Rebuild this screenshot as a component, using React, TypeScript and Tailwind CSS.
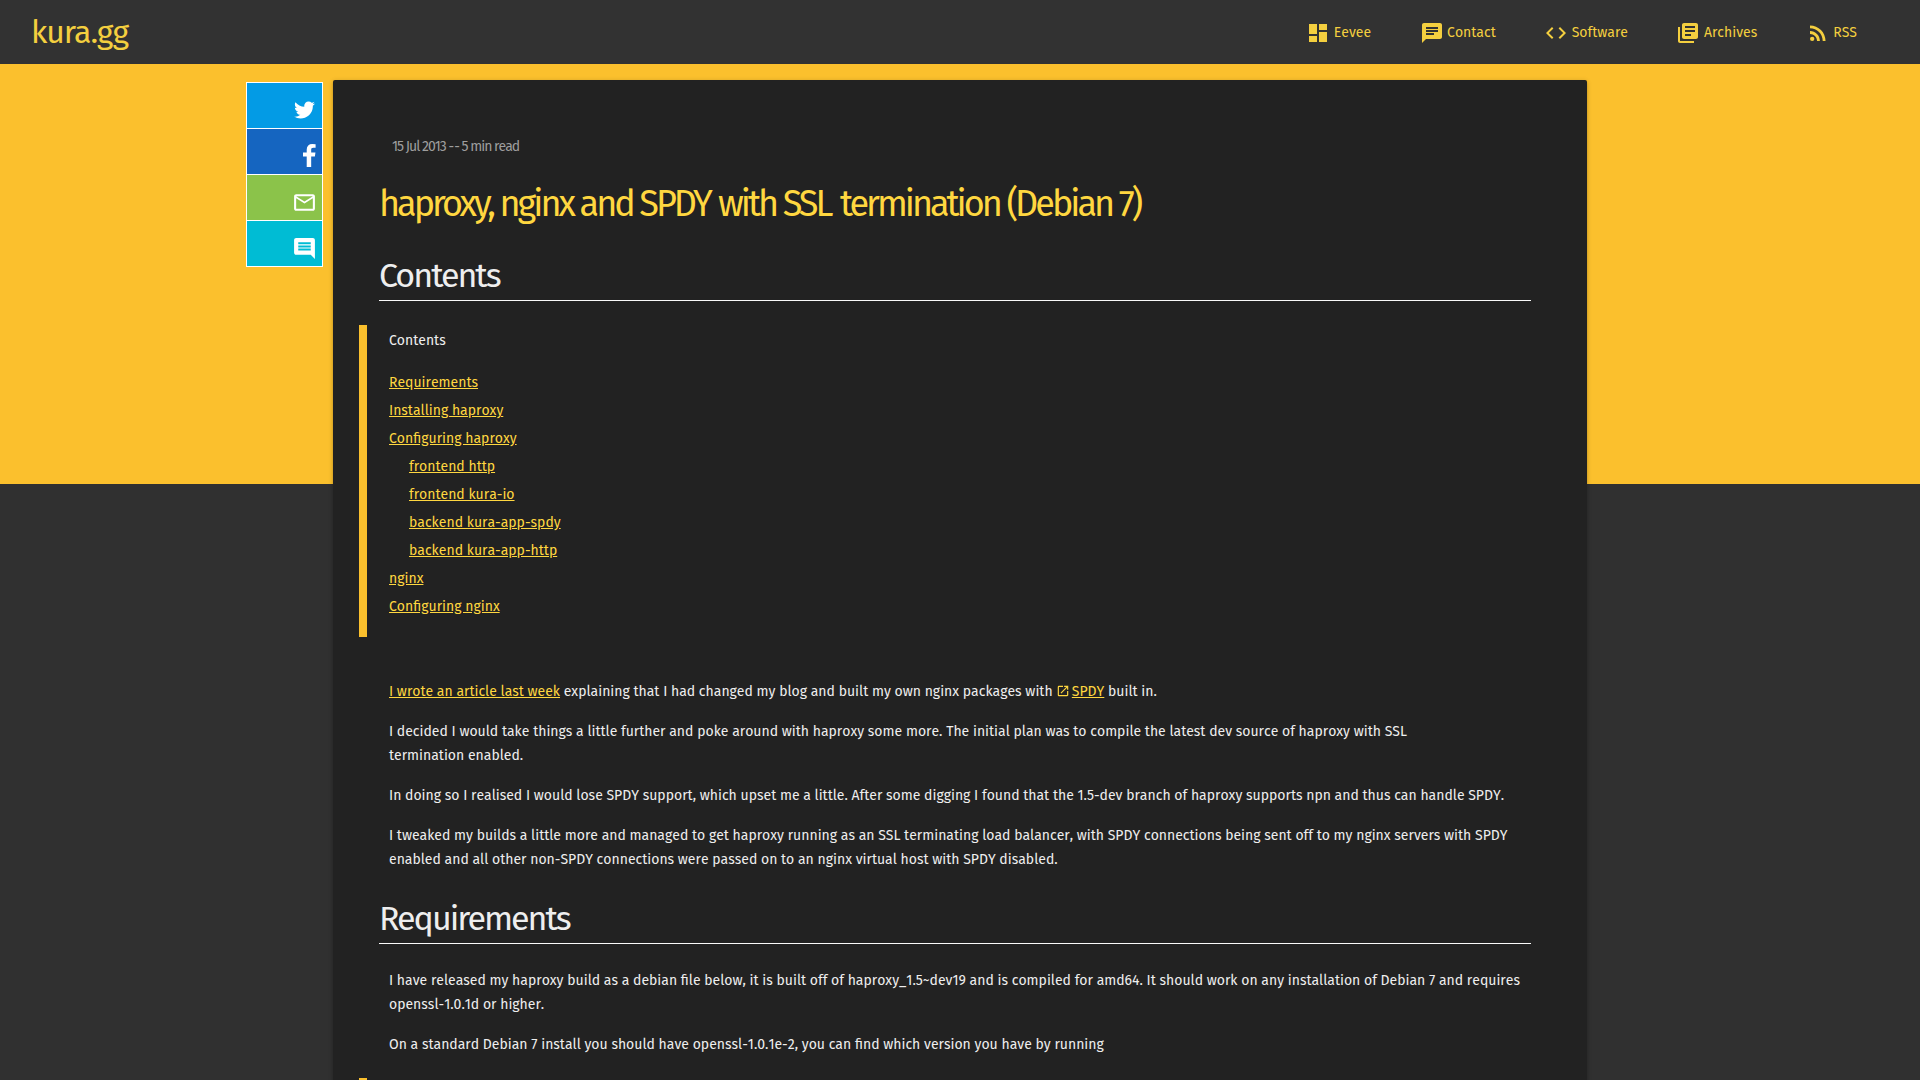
import type { ReactNode } from "react";
import {
  MdChat,
  MdCode,
  MdComment,
  MdDashboard,
  MdLibraryBooks,
  MdMailOutline,
  MdOpenInNew,
  MdRssFeed,
} from "react-icons/md";

const nav = [
  { label: "Eevee", Icon: MdDashboard },
  { label: "Contact", Icon: MdChat },
  { label: "Software", Icon: MdCode },
  { label: "Archives", Icon: MdLibraryBooks },
  { label: "RSS", Icon: MdRssFeed },
];

const toc = [
  { label: "Requirements" },
  { label: "Installing haproxy" },
  { label: "Configuring haproxy" },
  { label: "frontend http", nested: true },
  { label: "frontend kura-io", nested: true },
  { label: "backend kura-app-spdy", nested: true },
  { label: "backend kura-app-http", nested: true },
  { label: "nginx" },
  { label: "Configuring nginx" },
];

function Twitter() {
  return (
    <svg viewBox="108 256 1576 1280" className="mr-0.5 mb-1 h-[18px] w-[21px] fill-current">
      <path d="M1684 408q-67 98-162 167 1 14 1 42 0 130-38 259.500t-115.500 248.500-184.500 210.500-258 146-323 54.500q-271 0-496-145 35 4 78 4 225 0 401-138-105-2-188-64.500t-114-159.500q33 5 61 5 43 0 85-11-112-23-185.500-111.500t-73.500-205.500v-4q68 38 146 41-66-44-105-115t-39-154q0-88 44-163 121 149 294.500 238.500t371.500 99.500q-8-38-8-74 0-134 94.500-228.500t228.500-94.500q140 0 236 102 109-21 205-78-37 115-142 178 93-10 186-50z" />
    </svg>
  );
}

function Facebook() {
  return (
    <svg viewBox="95 0 864 1664" preserveAspectRatio="none" className="mr-px mb-0.5 h-[23px] w-[12.6px] fill-current">
      <path d="M959 12v264h-157q-86 0-116 36t-30 108v189h293l-39 296h-254v759h-306v-759h-255v-296h255v-218q0-186 104-288.500t277-102.500q147 0 228 12z" />
    </svg>
  );
}

function ShareButton({ color, children }: { color: string; children: ReactNode }) {
  return (
    <a className={`flex h-[46px] items-end justify-end border-b border-white pr-[5px] pb-[5px] text-white ${color}`}>
      {children}
    </a>
  );
}

function Heading({ children }: { children: ReactNode }) {
  return (
    <h2 className="-ml-2.5 h-[46px] w-[1152px] border-b border-[#fafafa] text-[34px] leading-[42px] tracking-[-2px] whitespace-nowrap [font-kerning:normal]">
      {children}
    </h2>
  );
}

function Link({ children }: { children: ReactNode }) {
  return <a className="text-[#ffd740] underline">{children}</a>;
}

export default function App() {
  return (
    <div className="flex h-[1080px] flex-col overflow-hidden bg-[#303030] font-['Fira_Sans','Open_Sans',sans-serif] text-[14px] leading-6 text-[#eee] [font-kerning:none]">
      <header className="flex h-16 shrink-0 items-center justify-between bg-[#323232] pr-[63px] pl-[31px] text-[#f4cf3f]">
        <a className="text-[32px] leading-[64px] tracking-[-1px] [font-kerning:normal]">kura.gg</a>
        <nav className="flex gap-[48.5px]">
          {nav.map(({ label, Icon }) => (
            <a key={label} className="flex h-6 items-center gap-[3.5px] pt-0.5">
              <Icon size={24} />
              <span>{label}</span>
            </a>
          ))}
        </nav>
      </header>

      <div className="flex h-[1016px] items-start bg-[linear-gradient(#fbc02d_420px,#303030_420px)] pl-[246px]">
        <aside className="mt-[18px] mr-2.5 w-[77px] shrink-0 border-x border-t border-white">
          <ShareButton color="bg-[#039be5]"><Twitter /></ShareButton>
          <ShareButton color="bg-[#1565c0]"><Facebook /></ShareButton>
          <ShareButton color="bg-[#8bc34a]"><MdMailOutline size={25} /></ShareButton>
          <ShareButton color="bg-[#00bcd4]"><MdComment size={25} /></ShareButton>
        </aside>

        <article className="mt-4 h-[1100px] w-[1254px] shrink-0 rounded-[2px] bg-[#222] pt-[55px] pl-14 shadow-[0_2px_2px_0_rgba(0,0,0,0.14),0_3px_1px_-2px_rgba(0,0,0,0.12),0_1px_5px_0_rgba(0,0,0,0.2)]">
          <p className="ml-[3px] tracking-[-1px] text-[#9e9e9e]">
            15 Jul 2013 <span className="tracking-normal">-</span>- 5 min read
          </p>
          <h1 className="-ml-2.5 mt-[21px] text-[36px] leading-[48px] tracking-[-3px] whitespace-nowrap text-[#ffd740] [font-kerning:normal]">
            haproxy, nginx and <span className="mr-[1.8px]">SPDY</span> with <span className="mr-[3px]">SSL</span> termination (Debian 7)
          </h1>
          <div className="mt-[27px]"><Heading>Contents</Heading></div>

          <div className="-ml-[30px] mt-6 h-[312px] border-l-8 border-[#fbc02d] pt-1 pl-[22px]">
            <p>Contents</p>
            <ul className="mt-4 leading-7">
              {toc.map(({ label, nested }) => (
                <li key={label} className={nested ? "ml-5" : ""}><Link>{label}</Link></li>
              ))}
            </ul>
          </div>

          <div className="mt-[43px] flex w-[1150px] flex-col gap-4">
            <p>
              <Link>I wrote an article last week</Link> explaining that I had changed my blog and built my own nginx packages with{" "}
              <MdOpenInNew className="mr-[1.5px] inline align-[-2px] text-[#ffd740]" size={14} />
              <Link>SPDY</Link> built in.
            </p>
            <p>
              I decided I would take things a little further and poke around with haproxy some more. The initial plan was to compile the latest dev source of haproxy with SSL
              <br />
              termination enabled.
            </p>
            <p>
              In doing so I realised I would lose SPDY support, which upset me a little. After some digging I found that the 1.5-dev branch of haproxy supports npn and thus can handle SPDY.
            </p>
            <p>
              I tweaked my builds a little more and managed to get haproxy running as an SSL terminating load balancer, with SPDY connections being sent off to my nginx servers with SPDY
              <br />
              enabled and all other non-SPDY connections were passed on to an nginx virtual host with SPDY disabled.
            </p>
          </div>

          <div className="mt-[26px]"><Heading>Requirements</Heading></div>

          <div className="mt-[25px] flex w-[1150px] flex-col gap-4">
            <p>
              I have released my haproxy build as a debian file below, it is built off of haproxy_1.5~dev19 and is compiled for amd64. It should work on any installation of Debian 7 and requires
              <br />
              openssl-1.0.1d or higher.
            </p>
            <p>On a standard Debian 7 install you should have openssl-1.0.1e-2, you can find which version you have by running</p>
          </div>
          <div className="-ml-[30px] mt-[21px] h-10 border-l-8 border-[#fbc02d]" />
        </article>
      </div>
    </div>
  );
}
